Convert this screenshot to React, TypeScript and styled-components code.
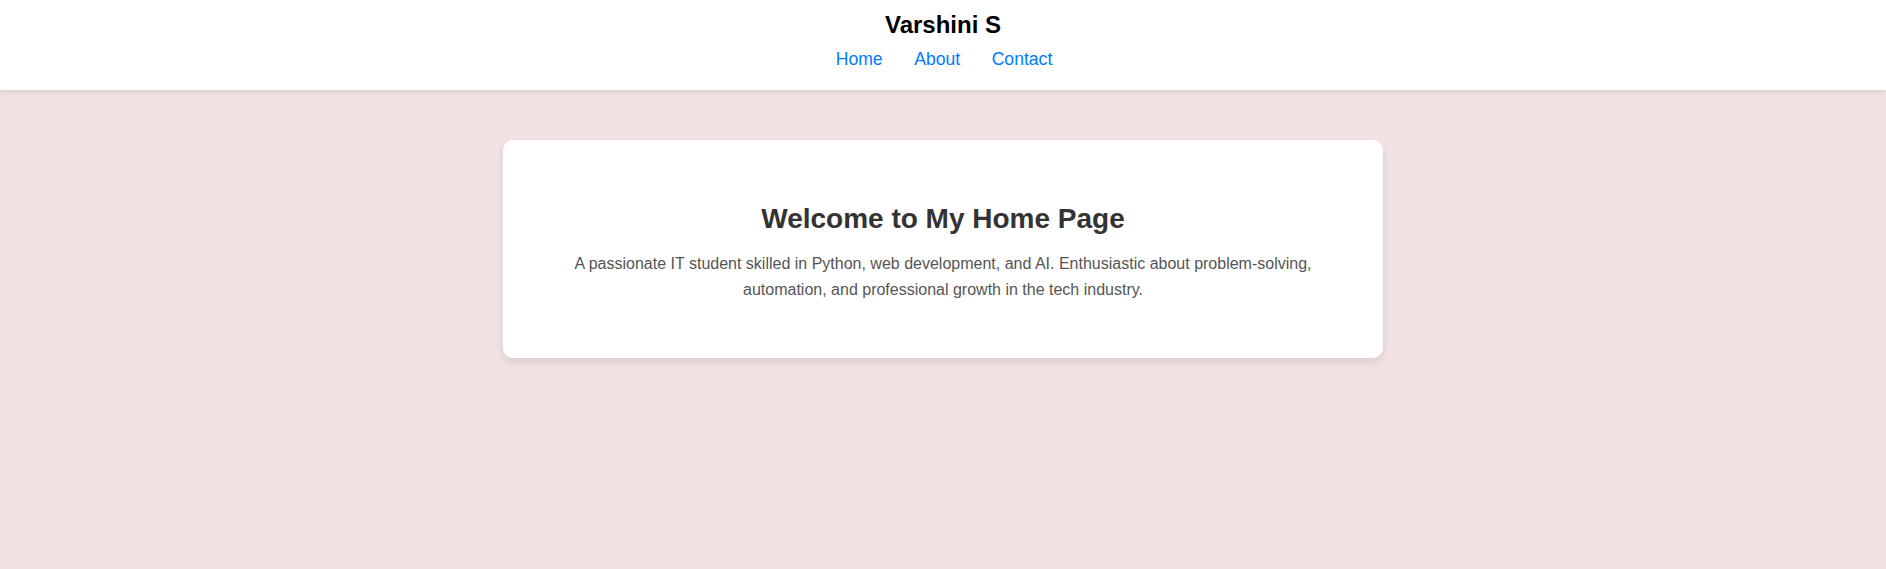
import React from "react";
import styled, { createGlobalStyle } from "styled-components";

const GlobalStyle = createGlobalStyle`
  html, body {
    margin: 0;
    padding: 0;
    background: #f2e2e2;
    font-family: "Liberation Sans", Arial, sans-serif;
  }
`;

const Page = styled.div`
  min-height: 569px;
  background: #f2e2e2;
`;

const Header = styled.header`
  background: #ffffff;
  padding: 11px 0 20px;
  display: flex;
  flex-direction: column;
  align-items: center;
  box-shadow: 0 2px 6px rgba(0, 0, 0, 0.1);
`;

const Title = styled.h1`
  margin: 0 0 10px;
  font-size: 24px;
  font-weight: 700;
  color: #000000;
`;

const Nav = styled.nav`
  display: flex;
  gap: 31.5px;
  padding-left: 2px;
`;

const NavLink = styled.a`
  font-size: 17.6px;
  color: #007bff;
  text-decoration: none;
`;

const Main = styled.main`
  display: flex;
  justify-content: center;
  padding-top: 50px;
`;

const Card = styled.section`
  width: 800px;
  padding: 40px;
  background: #ffffff;
  border-radius: 10px;
  box-shadow: 0 4px 10px rgba(0, 0, 0, 0.1);
  text-align: center;
`;

const Heading = styled.h2`
  margin: 23px 0 16px;
  font-size: 28px;
  font-weight: 700;
  color: #333333;
`;

const Text = styled.p`
  margin: 16px 0 16px;
  font-size: 16px;
  line-height: 1.6;
  color: #555555;
`;

export default function App() {
  return (
    <Page>
      <GlobalStyle />
      <Header>
        <Title>Varshini S</Title>
        <Nav>
          <NavLink href="#">Home</NavLink>
          <NavLink href="#">About</NavLink>
          <NavLink href="#">Contact</NavLink>
        </Nav>
      </Header>
      <Main>
        <Card>
          <Heading>Welcome to My Home Page</Heading>
          <Text>
            A passionate IT student skilled in Python, web development, and AI. Enthusiastic about
            problem-solving, automation, and professional growth in the tech industry.
          </Text>
        </Card>
      </Main>
    </Page>
  );
}
